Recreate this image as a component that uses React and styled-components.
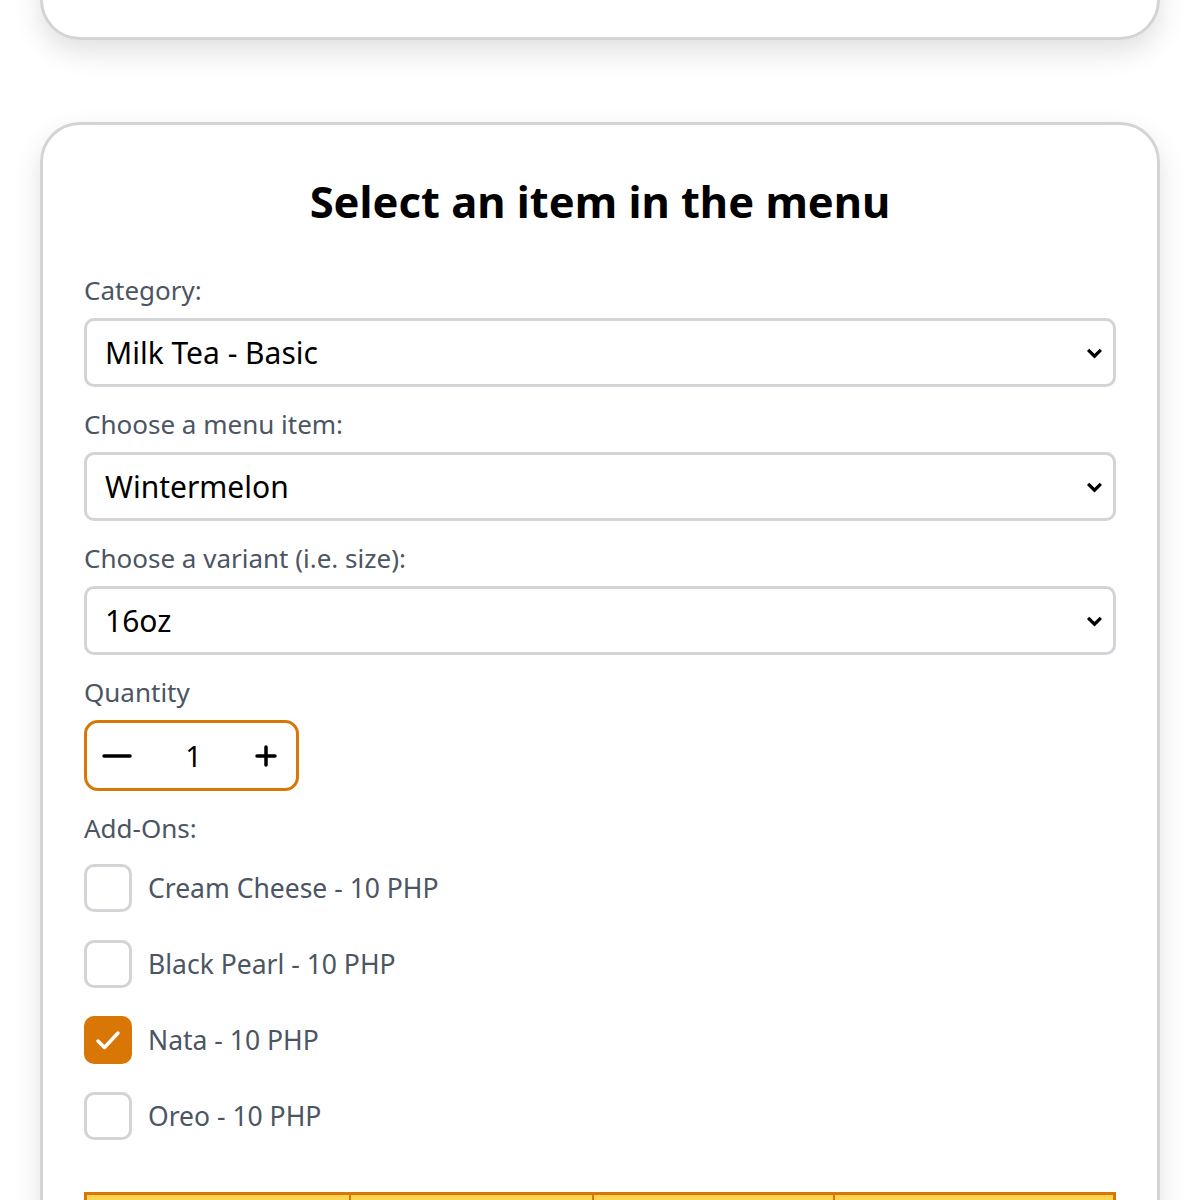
import React, { useState } from "react";
import styled, { createGlobalStyle } from "styled-components";

const GlobalStyle = createGlobalStyle`
  * { box-sizing: border-box; }
  html, body {
    margin: 0;
    padding: 0;
    background: #ffffff;
    font-family: "Noto Sans", "Open Sans", sans-serif;
    overflow: hidden;
  }
`;

const Page = styled.div`
  display: flex;
  flex-direction: column;
  gap: 82px;
  padding: 0 40px 60px;
  margin-top: -260px;
`;

const Card = styled.section`
  background: #fff;
  border: 3px solid #d4d4d8;
  border-radius: 40px;
  box-shadow: 0 12px 28px rgba(0, 0, 0, 0.12);
  padding: 40px 41px;
  min-height: ${(p) => (p.$height ? p.$height + "px" : "auto")};
`;

const Title = styled.h1`
  margin: 6px 0 41px;
  text-align: center;
  font-size: 43.5px;
  font-weight: 700;
  line-height: 60px;
  color: #000;
`;

const Field = styled.div`
  display: flex;
  flex-direction: column;
  margin-bottom: 19px;
`;

const Label = styled.label`
  font-size: 26px;
  line-height: 36px;
  color: #4b5563;
  margin-bottom: 10px;
`;

const SelectWrap = styled.div`
  position: relative;
`;

const Select = styled.select`
  appearance: none;
  width: 100%;
  height: 69px;
  border: 3px solid #d4d4d8;
  border-radius: 10px;
  background: #fff;
  padding: 0 60px 0 18px;
  font-family: inherit;
  font-size: 30px;
  color: #000;
  outline: none;
`;

const Chevron = styled.svg`
  position: absolute;
  right: 13px;
  top: 50%;
  transform: translateY(-50%);
  width: 17px;
  height: 17px;
  pointer-events: none;
`;

const Stepper = styled.div`
  display: flex;
  align-items: center;
  justify-content: space-between;
  width: 215px;
  height: 71px;
  border: 3px solid #d97706;
  border-radius: 14px;
  padding: 0 15px 0 15px;
`;

const StepButton = styled.button`
  display: flex;
  align-items: center;
  justify-content: center;
  border: 0;
  background: none;
  padding: 0;
  width: 30px;
  height: 30px;
  cursor: pointer;
`;

const Count = styled.span`
  font-size: 29px;
  color: #000;
  margin-left: 4px;
`;

const AddOnList = styled.div`
  display: flex;
  flex-direction: column;
  gap: 28px;
  margin-top: 8px;
`;

const AddOnRow = styled.label`
  display: flex;
  align-items: center;
  gap: 16px;
  cursor: pointer;
`;

const Box = styled.span`
  display: flex;
  align-items: center;
  justify-content: center;
  width: 48px;
  height: 48px;
  border-radius: 10px;
  border: 3px solid ${(p) => (p.$checked ? "#d97706" : "#d4d4d8")};
  background: ${(p) => (p.$checked ? "#d97706" : "#fff")};
`;

const AddOnText = styled.span`
  font-size: 26.5px;
  color: #4b5563;
`;

const Table = styled.table`
  width: 100%;
  margin-top: 52px;
  border-collapse: collapse;
  border: 3px solid #d97706;
`;

const Th = styled.th`
  background: #fdd34f;
  border: 2px solid #d97706;
  padding: 16px;
  height: 70px;
  font-size: 24px;
  text-align: left;
  vertical-align: bottom;
  width: ${(p) => p.$w}px;
`;

const items = ["Cream Cheese", "Black Pearl", "Nata", "Oreo"];

function ChevronIcon() {
  return (
    <Chevron viewBox="0 0 16 16">
      <path d="M2 5l6 6 6-6" fill="none" stroke="#000" strokeWidth="3" />
    </Chevron>
  );
}

function SelectField({ label, value }) {
  return (
    <Field>
      <Label>{label}</Label>
      <SelectWrap>
        <Select defaultValue={value}>
          <option>{value}</option>
        </Select>
        <ChevronIcon />
      </SelectWrap>
    </Field>
  );
}

export default function App() {
  const [qty, setQty] = useState(1);
  const [checked, setChecked] = useState({ Nata: true });

  return (
    <>
      <GlobalStyle />
      <Page>
        <Card $height={300} />
        <Card>
          <Title>Select an item in the menu</Title>
          <SelectField label="Category:" value="Milk Tea - Basic" />
          <SelectField label="Choose a menu item:" value="Wintermelon" />
          <SelectField label="Choose a variant (i.e. size):" value="16oz" />
          <Field>
            <Label>Quantity</Label>
            <Stepper>
              <StepButton onClick={() => setQty(Math.max(1, qty - 1))}>
                <svg width="30" height="30" viewBox="0 0 30 30">
                  <path d="M2 15h26" stroke="#000" strokeWidth="3.5" strokeLinecap="round" />
                </svg>
              </StepButton>
              <Count>{qty}</Count>
              <StepButton onClick={() => setQty(qty + 1)}>
                <svg width="22" height="22" viewBox="0 0 22 22">
                  <path d="M11 2v18M2 11h18" stroke="#000" strokeWidth="3.5" strokeLinecap="round" />
                </svg>
              </StepButton>
            </Stepper>
          </Field>
          <Field>
            <Label>Add-Ons:</Label>
            <AddOnList>
              {items.map((name) => (
                <AddOnRow
                  key={name}
                  onClick={() => setChecked({ ...checked, [name]: !checked[name] })}
                >
                  <Box $checked={!!checked[name]}>
                    {checked[name] && (
                      <svg width="30" height="30" viewBox="0 0 30 30">
                        <path
                          d="M5 16l6.5 6.5L25 8"
                          fill="none"
                          stroke="#fff"
                          strokeWidth="3.5"
                          strokeLinecap="round"
                          strokeLinejoin="round"
                        />
                      </svg>
                    )}
                  </Box>
                  <AddOnText>{name} - 10 PHP</AddOnText>
                </AddOnRow>
              ))}
            </AddOnList>
          </Field>
          <Table>
            <thead>
              <tr>
                <Th $w={265}>Item</Th>
                <Th $w={244}>Variant</Th>
                <Th $w={242}>Quantity</Th>
                <Th $w={281}>Price</Th>
              </tr>
            </thead>
          </Table>
        </Card>
      </Page>
    </>
  );
}
